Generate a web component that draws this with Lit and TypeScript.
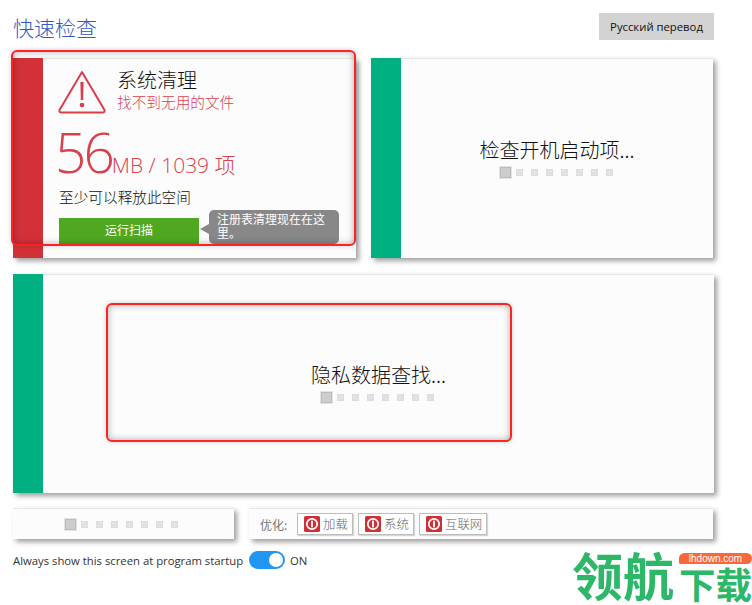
import { LitElement, html, css, svg } from "lit";
import { customElement } from "lit/decorators.js";

const dots = () => html`<div class="dots"><span class="dot first"></span>${[1, 2, 3, 4, 5, 6, 7].map(() => html`<span class="dot"></span>`)}</div>`;
const power = () => html`<svg class="pw" viewBox="0 0 16 16" width="16" height="16">
  <rect width="16" height="16" rx="1.5" fill="#cf3036"></rect>
  <circle cx="8" cy="8" r="5.2" fill="none" stroke="#fff" stroke-width="1.7"></circle>
  <rect x="7.1" y="4.6" width="1.8" height="6.8" fill="#fff"></rect>
</svg>`;

@customElement("app-root")
export class AppRoot extends LitElement {
  static styles = css`
    :host { display: block; position: relative; width: 752px; height: 605px; overflow: hidden; background: #fff;
      font-family: "Open Sans", "Noto Sans CJK SC", sans-serif; color: #222; }
    .page { padding: 13px 38px 0 13px; display: flex; flex-direction: column; }
    .head { display: flex; justify-content: space-between; align-items: flex-start; height: 27px; margin-bottom: 18px; }
    h1 { margin: 1px 0 0 0; font-size: 21px; line-height: 27px; font-weight: 300; color: #3259c0; font-family: "Noto Sans CJK SC", sans-serif; }
    .lang { width: 115px; height: 27px; background: #d3d3d3; display: flex; align-items: center; justify-content: center; font-size: 11.3px; color: #111; font-family: "Open Sans", sans-serif; }
    .card { display: flex; background: #fcfcfc; border-top: 1px solid #e6e6e6; box-sizing: border-box; box-shadow: 3px 3px 5px rgba(0,0,0,.38); position: relative; }
    .row { display: grid; grid-template-columns: 343px 342px; gap: 15px; height: 200px; margin-bottom: 16px; }
    .strip { width: 30px; margin-top: -1px; background: #00b080; flex: none; }
    .strip.red { background: #d33138; }
    .body { flex: 1; display: flex; flex-direction: column; align-items: center; justify-content: center; min-width: 0; padding-bottom: 1px; }
    .msg { font-family: "Noto Sans CJK SC", sans-serif; font-size: 20px; font-weight: 300; line-height: 26px; color: #111; }
    .dots { display: flex; align-items: center; gap: 8px; height: 14px; margin: 3px 3px 0 0; }
    .dot { width: 5px; height: 5px; background: #e2e2e2; border: 1px solid #dcdcdc; display: block; }
    .dot.first { width: 9px; height: 9px; background: #cdcdcd; border: 1px solid #bcbcbc; outline: 1px solid #e4e4e4; margin: 0 -3px 0 1px; }
    .scan { flex: 1; padding: 11px 0 0 15px; display: flex; flex-direction: column; align-items: flex-start; }
    .top { display: flex; gap: 11px; height: 45px; }
    .titles { margin-top: -2px; }
    .t1 { font-family: "Noto Sans CJK SC", sans-serif; font-size: 20px; font-weight: 300; line-height: 23px; color: #111; }
    .t2 { font-family: "Noto Sans CJK SC", sans-serif; font-size: 14.67px; line-height: 20px; margin-top: 1px; font-weight: 300; color: #d9404e; }
    .num { display: flex; align-items: baseline; color: #d8404c; margin: 8px 0 0 -3px; height: 60px; font-weight: 300; font-family: "Open Sans", "Noto Sans CJK SC", sans-serif; }
    .big { font-size: 55px; line-height: 58px; letter-spacing: -3px; }
    .unit { font-size: 21px; line-height: 26px; font-weight: 300; font-family: "Open Sans", "Noto Sans CJK SC", sans-serif; }
    .free { font-family: "Noto Sans CJK SC", sans-serif; font-size: 14.67px; line-height: 20px; margin: 4px 0 0 1px; font-weight: 300; color: #111; }
    .run { margin: 11px 0 0 1px; width: 140px; height: 26px; box-sizing: border-box; padding-bottom: 4px; background: #50a821; color: #fff; font-size: 12px; display: flex; align-items: center; justify-content: center; font-family: "Noto Sans CJK SC", sans-serif; }
    .tip { position: absolute; left: 196px; top: 151px; width: 130px; height: 34px; box-sizing: border-box; padding: 2px 8px; background: #888; border-radius: 5px; color: #fff; font-size: 12px; line-height: 14px; font-family: "Noto Sans CJK SC", sans-serif; }
    .tip::before { content: ""; position: absolute; left: -9px; top: 14px; border: 5px solid transparent; border-left: 0; border-right: 9px solid #888; }
    .wide { height: 219px; margin-bottom: 15px; }
    .wide .body { padding-bottom: 2px; }
    .bottom { display: grid; grid-template-columns: 221px 464px; gap: 15px; height: 31px; margin-bottom: 12px; }
    .bottom .body { padding: 0; }
    .bottom .dots { margin: 0 6px 0 0; }
    .opt { display: flex; align-items: center; padding: 0 0 0 11px; gap: 5px; flex: 1; font-family: "Noto Sans CJK SC", sans-serif; font-size: 12px; color: #777; }
    .opt .lbl { margin-right: 4px; width: 28px; }
    .btn { height: 22px; box-sizing: border-box; border: 1px solid #bdbdbd; background: #fff; display: flex; align-items: center; gap: 3px; padding: 0 0 0 6px; font-size: 12.4px; font-weight: 300; color: #666; box-shadow: 1px 1px 1px rgba(0,0,0,.15); }
    .btn.a { width: 56px; }
    .btn.b { width: 68px; }
    .pw { flex: none; }
    .always { display: flex; align-items: center; font-size: 11.3px; color: #333; height: 18px; font-family: "Open Sans", sans-serif; }
    .toggle { width: 36px; height: 18px; border-radius: 9px; background: #2196f3; margin: 0 5px 0 6px; position: relative; flex: none; }
    .toggle::after { content: ""; position: absolute; right: 2px; top: 2px; width: 14px; height: 14px; border-radius: 50%; background: #fff; }
    .mark { position: absolute; border: 2px solid #f22; border-radius: 6px; box-sizing: border-box; box-shadow: inset 0 0 7px rgba(0,0,0,.32), 0 0 5px rgba(0,0,0,.18); pointer-events: none; }
    .m1 { left: 11px; top: 50px; width: 345px; height: 196px; }
    .m2 { left: 106px; top: 303px; width: 406px; height: 139px; }
    .wm { position: absolute; left: 572px; top: 549px; display: flex; align-items: flex-end; gap: 5px; font-family: "Noto Sans CJK SC", sans-serif; font-weight: 700; color: #2db769; white-space: nowrap; }
    .wm-big { font-size: 51px; line-height: 50px; margin-bottom: 3px; }
    .wm-side { display: flex; flex-direction: column; }
    .wm-small { font-size: 36.5px; line-height: 36px; margin-top: 2px; }
    .badge { width: 73px; height: 11px; background: #f8683c; border-radius: 8px 8px 8px 2px; color: #fff; font-weight: 400; font-family: "Liberation Sans", sans-serif; font-size: 10px; line-height: 11px; text-align: center; }
  `;

  render() {
    return html`
      <div class="page">
        <div class="head">
          <h1>快速检查</h1>
          <div class="lang">Русский перевод</div>
        </div>
        <div class="row">
          <div class="card">
            <div class="strip red"></div>
            <div class="scan">
              <div class="top">
                <svg width="48" height="44" viewBox="0 0 48 44">
                  ${svg`<path d="M24 2 L46.5 40 Q47 42.5 44.5 42.5 L3.5 42.5 Q1 42.5 1.5 40 Z" fill="none" stroke="#d63f4a" stroke-width="2" stroke-linejoin="round"></path>
                  <path d="M22.4 12 h3.2 l-.4 18 h-2.4 z" fill="#d63f4a"></path>
                  <circle cx="24" cy="35" r="2.3" fill="#d63f4a"></circle>`}
                </svg>
                <div class="titles">
                  <div class="t1">系统清理</div>
                  <div class="t2">找不到无用的文件</div>
                </div>
              </div>
              <div class="num"><span class="big">56</span><span class="unit">MB / 1039 项</span></div>
              <div class="free">至少可以释放此空间</div>
              <div class="run">运行扫描</div>
            </div>
            <div class="tip">注册表清理现在在这里。</div>
          </div>
          <div class="card">
            <div class="strip"></div>
            <div class="body"><div class="msg">检查开机启动项...</div>${dots()}</div>
          </div>
        </div>
        <div class="card wide">
          <div class="strip"></div>
          <div class="body"><div class="msg">隐私数据查找...</div>${dots()}</div>
        </div>
        <div class="bottom">
          <div class="card"><div class="body">${dots()}</div></div>
          <div class="card">
            <div class="opt">
              <span class="lbl">优化:</span>
              <span class="btn a">${power()}加载</span>
              <span class="btn a">${power()}系统</span>
              <span class="btn b">${power()}互联网</span>
            </div>
          </div>
        </div>
        <div class="always">Always show this screen at program startup<span class="toggle"></span>ON</div>
      </div>
      <div class="mark m1"></div>
      <div class="mark m2"></div>
      <div class="wm">
        <span class="wm-big">领航</span>
        <div class="wm-side"><div class="badge">lhdown.com</div><span class="wm-small">下载</span></div>
      </div>
    `;
  }
}
